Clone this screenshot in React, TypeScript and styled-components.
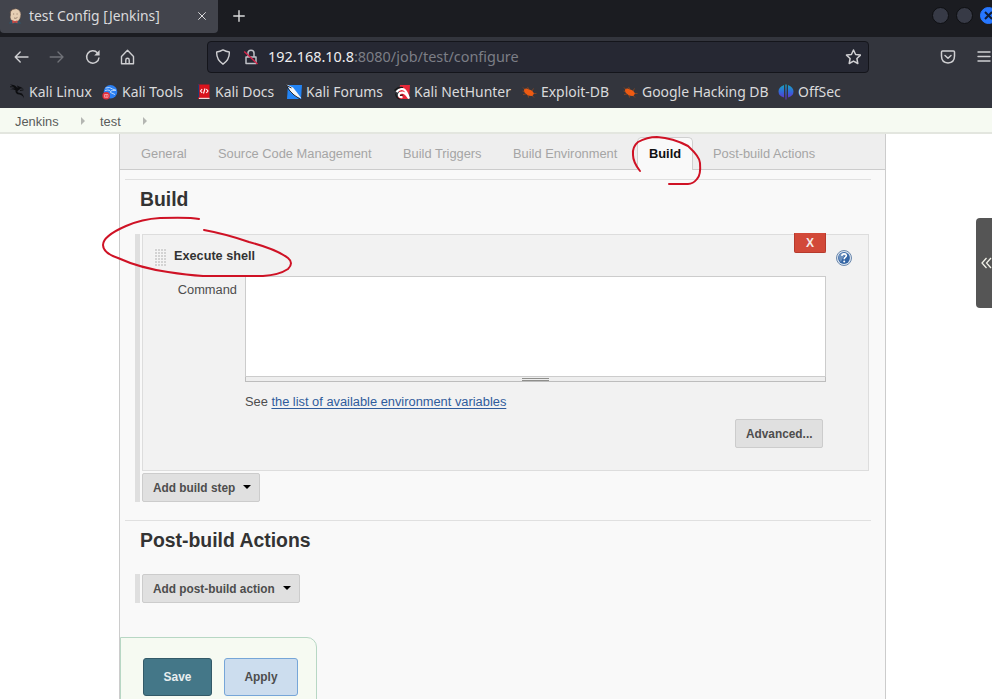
import React from "react";
import styled, { createGlobalStyle, css } from "styled-components";

const GlobalStyle = createGlobalStyle`
  * { box-sizing: border-box; }
  body { margin: 0; background: #fff; overflow: hidden; }
  button { font-family: inherit; }
`;

const Page = styled.div`
  position: relative;
  width: 992px;
  height: 699px;
  overflow: hidden;
  font-family: "Liberation Sans", Arial, sans-serif;
  font-size: 12.85px;
  color: #4d4d4d;
`;

/* ---------- browser chrome ---------- */

const Browser = styled.header`
  height: 108px;
  background: #33353d;
  font-family: "Noto Sans", sans-serif;
  color: #dadadc;
`;

const TabStrip = styled.div`
  display: flex;
  height: 37px;
  background: #1b1c21;
`;

const BrowserTab = styled.div`
  display: flex;
  align-items: center;
  width: 218px;
  height: 33px;
  padding: 0 11px 2px 8px;
  background: #42444c;
  border-radius: 0 0 4px 4px;
`;

const TabTitle = styled.span`
  flex: 1;
  padding-left: 6px;
  font-size: 13.85px;
  line-height: 20px;
  white-space: nowrap;
`;

const NewTab = styled.div`
  padding: 9px 0 0 14px;
  line-height: 0;
`;

const WindowControls = styled.div`
  display: flex;
  gap: 7px;
  margin-left: auto;
  margin-right: -5px;
  padding-top: 7px;
`;

const WindowButton = styled.span<{ $close?: boolean }>`
  width: 17px;
  height: 17px;
  border-radius: 50%;
  border: 1px solid ${(p) => (p.$close ? "#2777ff" : "#0e0f12")};
  background: ${(p) => (p.$close ? "#2777ff" : "#373a46")};
  line-height: 0;
`;

const NavBar = styled.div`
  display: flex;
  align-items: center;
  height: 40px;
  padding-left: 14px;
`;

const NavIcon = styled.span<{ $dim?: boolean; $gap: number }>`
  width: 16px;
  height: 16px;
  flex: none;
  line-height: 0;
  margin-right: ${(p) => p.$gap}px;
  color: ${(p) => (p.$dim ? "#707278" : "#cfcfd2")};
`;

const UrlBar = styled.div`
  display: flex;
  align-items: center;
  width: 663px;
  height: 32px;
  margin-right: 71px;
  padding: 0 7px;
  background: #262833;
  border: 1px solid #14151b;
  border-radius: 4px;
`;

const Url = styled.span`
  flex: 1;
  font-size: 14.45px;
  line-height: 20px;
  color: #7c7e86;
  white-space: nowrap;
  b { font-weight: 400; color: #eeeef0; }
`;

const Bookmarks = styled.div`
  display: flex;
  height: 31px;
  padding-left: 9px;
`;

const Bookmark = styled.span<{ $w: number }>`
  display: flex;
  align-items: center;
  gap: 4px;
  width: ${(p) => p.$w}px;
  height: 29px;
  flex: none;
  font-size: 13.95px;
  white-space: nowrap;
  svg { flex: none; }
`;

/* ---------- page ---------- */

const Breadcrumbs = styled.nav`
  display: flex;
  align-items: center;
  height: 26px;
  padding: 0 0 0 15px;
  background: #f6faf2;
  border-bottom: 2px solid #e3e6df;
  color: #5a5c5a;
`;

const Crumb = styled.span<{ $w: number }>`
  width: ${(p) => p.$w}px;
  line-height: 15px;
  padding-top: 2px;
`;

const CrumbArrow = styled.span`
  width: 0;
  height: 0;
  margin: 2px 15px 0 0;
  border: 4px solid transparent;
  border-left-color: #b4b6b2;
  border-right-width: 0;
`;

const ConfigPanel = styled.main`
  width: 767px;
  height: 565px;
  margin-left: 119px;
  background: #f9f9f9;
  border: solid #ccc;
  border-width: 0 1px;
`;

const ConfigTabs = styled.div`
  display: flex;
  height: 36px;
  padding: 3px 0 0 5px;
  background: #eee;
  border-bottom: 1px solid #ccc;
`;

const ConfigTab = styled.a<{ $w: number; $active?: boolean }>`
  width: ${(p) => p.$w}px;
  height: 33px;
  flex: none;
  padding: 8px 0 0 15px;
  border: 1px solid transparent;
  border-bottom: 0;
  line-height: 15px;
  color: #a5a5a5;
  white-space: nowrap;
  ${(p) =>
    p.$active &&
    css`
      background: #f9f9f9;
      border-color: #d0d0d0;
      border-radius: 5px 5px 0 0;
      color: #111;
      font-weight: 700;
      padding-left: 11px;
      margin: 0 4px;
    `}
`;

const Section = styled.section<{ $h: number }>`
  height: ${(p) => p.$h}px;
  width: 746px;
  margin-left: 5px;
  border-top: 1px solid #e0e0e0;
`;

const Sections = styled.div`
  padding-top: 9px;
`;

const SectionTitle = styled.h2`
  margin: 0;
  padding: 7px 0 0 15px;
  font-size: 19.4px;
  line-height: 24px;
  color: #333;
`;

const Steps = styled.div<{ $top: number; $w: number }>`
  width: ${(p) => p.$w}px;
  margin: ${(p) => p.$top}px 0 0 10px;
  padding-left: 2px;
  border-left: 5px solid #dfdfdf;
`;

const StepCard = styled.div`
  width: 727px;
  height: 237px;
  margin-bottom: 2px;
  background: #f2f2f2;
  border: 1px solid #ddd;
`;

const StepHeader = styled.div`
  display: flex;
  height: 41px;
  font-weight: 700;
  color: #333;
`;

const DragHandle = styled.span`
  width: 12px;
  height: 18px;
  margin: 13px 8px 0 11px;
  background-color: #fff;
  background-image: linear-gradient(#f4f4f4 1px, transparent 1px), linear-gradient(90deg, #f4f4f4 1px, #d3d3d3 1px);
  background-size: 3px 3px;
`;

const StepName = styled.span`
  flex: 1;
  padding-top: 14px;
  font-size: 12.7px;
  line-height: 15px;
`;

const DeleteButton = styled.button`
  width: 32px;
  height: 20px;
  margin: -2px 9px 0 0;
  padding: 1px 0 0;
  background: #d24939;
  border: 1px solid #b63a2d;
  border-top-color: #d24939;
  border-radius: 0 0 2px 2px;
  color: #f5e9e7;
  font-size: 12px;
  line-height: 15px;
  font-weight: 700;
`;

const HelpIcon = styled.span`
  width: 18px;
  margin: 14px 15px 0 0;
  line-height: 0;
`;

const Field = styled.div`
  display: flex;
`;

const FieldLabel = styled.label`
  width: 102px;
  padding: 6px 8px 0 0;
  text-align: right;
  line-height: 15px;
`;

const FieldBody = styled.div`
  width: 581px;
`;

const CommandBox = styled.div`
  height: 101px;
  background: #fff;
  border: 1px solid #ccc;
`;

const ResizeBar = styled.div`
  display: flex;
  justify-content: center;
  height: 5px;
  padding-top: 1px;
  background: #eee;
  border: 1px solid #bdbdbd;
  border-top: 0;
`;

const Grip = styled.span`
  width: 27px;
  height: 3px;
  border: solid #8f8f8c;
  border-width: 1px 0;
`;

const Hint = styled.p`
  margin: 12px 0 0;
  line-height: 15px;
  a {
    color: #2f5c9c;
    text-decoration: underline;
    text-underline-offset: 2px;
  }
`;

const Right = styled.div`
  display: flex;
  justify-content: flex-end;
  padding: 10px 3px 0 0;
`;

const Button = styled.button<{ $w: number }>`
  display: flex;
  align-items: center;
  width: ${(p) => p.$w}px;
  height: 29px;
  padding: 0 8px 0 10px;
  background: #e0e0e0;
  border: 1px solid #ccc;
  border-radius: 2px;
  color: #4d4d4d;
  font-size: 11.85px;
  font-weight: 700;
  white-space: nowrap;
`;

const Caret = styled.span`
  margin: -2px 0 0 8px;
  border: 4px solid transparent;
  border-top-color: #000;
  border-bottom-width: 0;
`;

const ActionBar = styled.footer`
  display: flex;
  gap: 12px;
  width: 197px;
  height: 70px;
  margin-top: 35px;
  padding: 20px 0 0 22px;
  background: #f6faf2;
  border: 1px solid #b7d7c4;
  border-radius: 0 10px 0 0;
`;

const ActionButton = styled.button<{ $primary?: boolean }>`
  width: ${(p) => (p.$primary ? 69 : 74)}px;
  height: 38px;
  padding: 0;
  background: ${(p) => (p.$primary ? "#447788" : "#ccddee")};
  border: 1px solid ${(p) => (p.$primary ? "#335a68" : "#76a6d8")};
  border-radius: 3px;
  color: ${(p) => (p.$primary ? "#e8eeef" : "#4d4d4d")};
  font-size: 11.9px;
  font-weight: 700;
`;

const SideToggle = styled.aside`
  position: absolute;
  right: 0;
  top: 218px;
  width: 16px;
  height: 90px;
  padding: 39px 0 0 5px;
  background: #555;
  border-radius: 4px 0 0 4px;
  line-height: 0;
`;

const Marks = styled.svg`
  position: absolute;
  left: 0;
  top: 0;
  pointer-events: none;
`;

/* ---------- icons ---------- */

const Line = ({ d, size = 16, w = 1.4 }: { d: string; size?: number; w?: number }) => (
  <svg width={size} height={size} viewBox="0 0 16 16" fill="none" stroke="currentColor" strokeWidth={w} strokeLinecap="round" strokeLinejoin="round">
    <path d={d} />
  </svg>
);

const JenkinsIcon = () => (
  <svg width="15" height="16" viewBox="0 0 15 16">
    <path d="M3 12Q1.500 9 2.500 7Q1.500 3 5 1.200Q9-.2 11.500 2.500Q14 6 12 10.500L10 13.500H5Z" fill="#e6cfb4" stroke="#5b4840" strokeWidth=".5" />
    <path d="M2.500 8V4Q4 1.500 7 1Q3 .4 1.800 4.500Z" fill="#7d6655" />
    <path d="M5 6h1.200M8.500 6h1.200M6 10q2 1 3.500-.6" stroke="#8a7060" strokeWidth=".8" fill="none" />
    <path d="M1 15.500l2-3.500 4 2 4-1 2.500 2.500Z" fill="#30566a" />
    <path d="M4 12l3 1.200 2.500-1v3L7 14.600 4.500 15.500Z" fill="#c94a45" />
  </svg>
);

const ShieldIcon = () => <Line d="M8 .9Q11 2.600 14.300 3 14.800 10.500 8 15.200 1.200 10.500 1.700 3 5 2.600 8 .9Z" />;

const InsecureIcon = () => (
  <svg width="16" height="16" viewBox="0 0 16 16" fill="none" strokeWidth="1.500">
    <path d="M3 8h10v6.500H3ZM5 8V4q0-2.800 3-2.800T11 4v4" stroke="#bfc0c6" strokeLinejoin="round" />
    <path d="M1.200 2.500 14.500 15" stroke="#d4244a" strokeWidth="1.500" />
  </svg>
);

const DragonIcon = () => (
  <svg width="16" height="17" viewBox="0 0 16 17">
    <path d="M1 1.500Q6 1.500 8 4.500L11 3.800 14.500 5.500 11.500 5.600 10 7Q7.500 8 9 9.500L13 10.500Q14.500 12 15 15.500Q13.500 12 10.500 11.600Q6 11 6.500 7.200Q4 6 1 6.500Q4 5 6 5.200Q4 3 1 1.500Z" fill="#0d0e11" />
    <path d="M1 3.800Q4 3.200 7 5M11 7.500l3.500-.6M8 3l2.500 1" stroke="#0d0e11" strokeWidth=".9" fill="none" />
  </svg>
);

const ToolsIcon = () => (
  <svg width="16" height="16" viewBox="0 0 16 16">
    <circle cx="8.500" cy="7.800" r="6.800" fill="#2b7ff2" />
    <path d="M3.500 4q4.500-1.500 7 1l3.500 1.300-3.500.2q-2.500 0-2 2l4.500 2M3 6.500q3-1 5 0" fill="none" stroke="#b9d8fb" strokeWidth="1" />
    <circle cx="4.200" cy="11.800" r="3.800" fill="#e3303d" />
    <path d="M2.500 10.500h3.500v2.800H2.500ZM4.200 10.500v2.800" fill="none" stroke="#f8b7ba" strokeWidth=".7" />
  </svg>
);

const DocsIcon = () => (
  <svg width="14" height="16" viewBox="0 0 14 16">
    <path d="M1 .5h11.500v14.500H1Z" fill="#d9131c" />
    <path d="M1 .5h1.200v13H1Z" fill="#183d72" />
    <path d="M2 13.800h10.500V15H2Z" fill="#f2dada" />
    <path d="M5.200 5 3.500 7l1.700 2M9.300 5 11 7 9.300 9M8 4.500 6.500 9.500" stroke="#fff" strokeWidth="1.100" fill="none" />
  </svg>
);

const ForumsIcon = () => (
  <svg width="16" height="16" viewBox="0 0 16 16">
    <path d="M2 1h14l-1 14H1Z" fill="#2384f5" />
    <path d="M.5.500 7 3.500 11 8.500 15.500 14.500 10 12.500 4.500 8 2.500 3.500Z" fill="#f4f6f8" />
    <path d="M.5 1.500 5.500 4M1 3l3 4 4 4 6 4" stroke="#18191d" fill="none" strokeWidth=".9" />
  </svg>
);

const HunterIcon = () => (
  <svg width="16" height="16" viewBox="0 0 16 16">
    <path d="M6 1h10L15 15H4Z" fill="#e72839" />
    <path d="M2.500 8Q6 3.500 10 5.500 12.500 7 15 14.500 11.500 9 8.500 8.500 5 8.500 4.800 11q.2 2.500 3.700 2" fill="none" stroke="#fff" strokeWidth="2.100" />
    <path d="M.5 6.500Q4 2.500 9 3.500M1.500 9.500Q2 14 6 15.300M6 11.500l3-.5" fill="none" stroke="#171717" strokeWidth="1.200" />
  </svg>
);

const ExploitIcon = () => (
  <svg width="15" height="14" viewBox="0 0 15 14">
    <path d="M2 4.500Q4 2.500 7 4.500 10.500 5 12 8.500L10.500 11Q6 11.500 3.500 8.500 1.500 7 2 4.500Z" fill="#ed5a12" />
    <path d="M3 4.500 1 2.500M7 4.500 5.500 2M10 6l1.500-2.500M12 8.500h2.500M10 10.500l2 2M6 10l.5 2.500M4 9 1 9.500M2.500 6.500.5 6" stroke="#a34a19" strokeWidth=".7" />
  </svg>
);

const OffSecIcon = () => (
  <svg width="16" height="16" viewBox="0 0 16 16">
    <defs>
      <linearGradient id="offsec" x1="0" y1="0" x2="0" y2="1">
        <stop offset="0" stopColor="#16a7bf" />
        <stop offset=".5" stopColor="#3267db" />
        <stop offset="1" stopColor="#6d28c9" />
      </linearGradient>
    </defs>
    <path d="M6 1v12.500Q.5 12 .5 7.500.5 3 6 1ZM7.300.5h1.400l-.2 15h-1ZM10 1q5.500 2 5.500 6.500T10 13.500Z" fill="url(#offsec)" />
  </svg>
);

const HelpGlyph = () => (
  <svg width="18" height="18" viewBox="0 0 18 18">
    <circle cx="9" cy="9" r="7.500" fill="#dce5f0" stroke="#6c89ad" />
    <circle cx="9" cy="9" r="5.900" fill="#3465a4" />
    <path d="M4 6q3-4 8-1Q8 7 6 13 3 10 4 6Z" fill="#6d91be" />
    <path d="M6.800 6.900q.2-2 2.300-2t2.300 1.700q0 1-1.200 1.800Q9.200 9 9.200 10.200" fill="none" stroke="#fff" strokeWidth="1.600" />
    <circle cx="9.200" cy="12.500" r="1" fill="#fff" />
  </svg>
);

const bookmarks = [
  { label: "Kali Linux", w: 93, icon: <DragonIcon /> },
  { label: "Kali Tools", w: 95, icon: <ToolsIcon /> },
  { label: "Kali Docs", w: 89, icon: <DocsIcon /> },
  { label: "Kali Forums", w: 108, icon: <ForumsIcon /> },
  { label: "Kali NetHunter", w: 128, icon: <HunterIcon /> },
  { label: "Exploit-DB", w: 101, icon: <ExploitIcon /> },
  { label: "Google Hacking DB", w: 155, icon: <ExploitIcon /> },
  { label: "OffSec", w: 70, icon: <OffSecIcon /> },
];

const configTabs = [
  { label: "General", w: 77 },
  { label: "Source Code Management", w: 185 },
  { label: "Build Triggers", w: 110 },
  { label: "Build Environment", w: 136 },
  { label: "Build", w: 56, active: true },
  { label: "Post-build Actions", w: 140 },
];

export default function App() {
  return (
    <Page>
      <GlobalStyle />
      <Browser>
        <TabStrip>
          <BrowserTab>
            <JenkinsIcon />
            <TabTitle>test Config [Jenkins]</TabTitle>
            <Line size={10} w={1.6} d="M2.500 2.500l11 11M13.500 2.500l-11 11" />
          </BrowserTab>
          <NewTab>
            <Line size={14} w={1.6} d="M8 2v12M2 8h12" />
          </NewTab>
          <WindowControls>
            <WindowButton />
            <WindowButton />
            <WindowButton $close>
              <svg width="15" height="15" viewBox="0 0 15 15">
                <path d="M4 4l7 7M11 4l-7 7" stroke="#101d36" strokeWidth="2" />
              </svg>
            </WindowButton>
          </WindowControls>
        </TabStrip>
        <NavBar>
          <NavIcon $gap={19}><Line d="M14 8H1.200M6.200 3 1.200 8l5 5" /></NavIcon>
          <NavIcon $gap={20} $dim><Line d="M1.200 8H14M9 3l5 5-5 5" /></NavIcon>
          <NavIcon $gap={19}>
            <svg width="16" height="16" viewBox="0 0 16 16" fill="none" stroke="currentColor" strokeWidth="1.500">
              <path d="M12.500 3.900A6.200 6.200 0 1 0 14 8.500" />
              <path d="M14.600 1v5.500H9.200Z" fill="currentColor" stroke="none" />
            </svg>
          </NavIcon>
          <NavIcon $gap={71}><Line d="M1.500 7.500 7.500 1.300 13.500 7.500M1.500 7.500V14.800h12V7.500M5.800 14.500v-3.500q0-1.700 1.700-1.700t1.700 1.700v3.500" /></NavIcon>
          <UrlBar>
            <NavIcon $gap={12}><ShieldIcon /></NavIcon>
            <NavIcon $gap={9}><InsecureIcon /></NavIcon>
            <Url><b>192.168.10.8</b>:8080/job/test/configure</Url>
            <NavIcon $gap={0}><Line w={1.5} d="M8.500 1l2.100 4.500 4.900.6-3.600 3.400.9 5-4.300-2.400-4.300 2.400.9-5L1.500 6.100l4.900-.6Z" /></NavIcon>
          </UrlBar>
          <NavIcon $gap={20}>
            <Line d="M2.500 2h11q1 0 1 1v4q0 6.500-6.500 7-6.500-.5-6.500-7V3q0-1 1-1ZM5 6.500 8 9.300l3-2.800" w={1.5} />
          </NavIcon>
          <NavIcon $gap={0}><Line d="M2 3h12M2 7.500h12M2 12h12" /></NavIcon>
        </NavBar>
        <Bookmarks>
          {bookmarks.map((b) => (
            <Bookmark key={b.label} $w={b.w}>{b.icon}{b.label}</Bookmark>
          ))}
        </Bookmarks>
      </Browser>

      <Breadcrumbs>
        <Crumb $w={66}>Jenkins</Crumb>
        <CrumbArrow />
        <Crumb $w={43}>test</Crumb>
        <CrumbArrow />
      </Breadcrumbs>

      <ConfigPanel>
        <ConfigTabs>
          {configTabs.map((t) => (
            <ConfigTab key={t.label} $w={t.w} $active={t.active}>{t.label}</ConfigTab>
          ))}
        </ConfigTabs>
        <Sections>
          <Section $h={341}>
            <SectionTitle>Build</SectionTitle>
            <Steps $top={23} $w={735}>
              <StepCard>
                <StepHeader>
                  <DragHandle />
                  <StepName>Execute shell</StepName>
                  <DeleteButton>X</DeleteButton>
                  <HelpIcon><HelpGlyph /></HelpIcon>
                </StepHeader>
                <Field>
                  <FieldLabel>Command</FieldLabel>
                  <FieldBody>
                    <CommandBox />
                    <ResizeBar><Grip /></ResizeBar>
                    <Hint>See <a>the list of available environment variables</a></Hint>
                    <Right><Button $w={88}>Advanced...</Button></Right>
                  </FieldBody>
                </Field>
              </StepCard>
              <Button $w={118}>Add build step<Caret /></Button>
            </Steps>
          </Section>
          <Section $h={82}>
            <SectionTitle>Post-build Actions</SectionTitle>
            <Steps $top={22} $w={165}>
              <Button $w={158}>Add post-build action<Caret /></Button>
            </Steps>
          </Section>
        </Sections>
        <ActionBar>
          <ActionButton $primary>Save</ActionButton>
          <ActionButton>Apply</ActionButton>
        </ActionBar>
      </ConfigPanel>

      <SideToggle>
        <svg width="11" height="12" viewBox="0 0 11 12" fill="none" stroke="#f1f1e8" strokeWidth="1.300">
          <path d="M5.500 1 1 6l4.500 5M10 1 5.500 6l4.500 5" />
        </svg>
      </SideToggle>

      <Marks width="992" height="699" fill="none" stroke="#cf1225" strokeWidth="2" strokeLinecap="round">
        <path d="M199 219Q190 217 160 218Q142 219 126 226Q103 236 103 245Q103 253 118 258Q140 268 168 272Q187 275 203 276H263Q279 275 288 269Q294 263 288 258Q276 249 249 242Q226 234 204 230" />
        <path d="M640 171Q633 162 633 155Q632 147 638 142Q647 137 657 137Q673 138 688 146Q700 157 700 163Q701 175 697 179Q693 184 688 184H669" />
      </Marks>
    </Page>
  );
}
